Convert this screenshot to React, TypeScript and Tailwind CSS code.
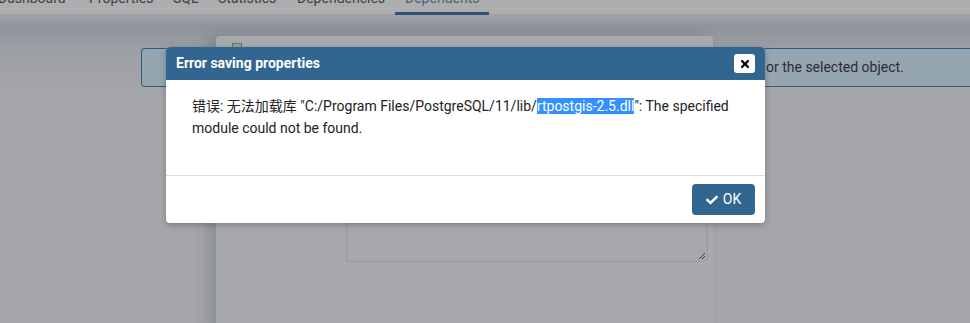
import { FaCheck, FaTimes } from "react-icons/fa";

const tabs = [
  { name: "Dashboard", left: -2 },
  { name: "Properties", left: 89 },
  { name: "SQL", left: 173 },
  { name: "Statistics", left: 218 },
  { name: "Dependencies", left: 297 },
  { name: "Dependents", left: 405 },
];

const App = () => {
  return (
    <div className="relative w-[970px] h-[323px] overflow-hidden bg-[#a5a6aa] font-['Roboto','Noto_Sans_CJK_SC',sans-serif]">
      {/* tab strip, scrolled so only the bottom shows */}
      <div className="relative h-[15px] bg-[#adaeb0] border-b border-[#9b9da1]">
        {tabs.map((t, i) => (
          <span
            key={i}
            style={{ left: t.left }}
            className={
              "absolute top-[-10px] text-[14px] leading-[17px] " +
              (i === 5 ? "text-[#4d6073]" : "text-[#4a3c3e]")
            }
          >
            {t.name}
          </span>
        ))}
        <div className="absolute left-[395px] top-[12px] w-[94px] h-[3px] bg-[#2f5275]" />
      </div>

      {/* page content under overlay */}
      <div className="h-[308px] bg-[linear-gradient(180deg,#a1a3a8_0px,#8f949c_12px,#9ea0a6_40px,#a5a6aa_80px)] pt-[33px] pl-[141px]">
        <div className="h-[39px] flex items-center pl-[624px] rounded-l-[4px] border border-r-0 border-[#2e5b82] bg-[#95a6b0] text-[14px] text-[#2b2c33]">
          or the selected object.
        </div>
      </div>

      {/* dialog behind */}
      <div className="absolute left-[216px] top-[36px] w-[497px] h-[300px] rounded-t-[4px] bg-[#a8a9ad] shadow-[-8px_0_14px_rgba(60,70,90,0.25)]">
        <div className="flex items-center gap-[20px] pl-[16px] pt-[7px]">
          <span className="w-[10px] h-[10px] border border-[#5f7a5c] bg-[#93a58f]" />
        </div>
        <div className="absolute left-[130px] top-[150px] w-[362px] h-[76px] rounded-[3px] border border-[#989aa0] bg-[#a7a8ac]">
          <svg className="absolute right-[1px] bottom-[1px]" width="9" height="9" viewBox="0 0 9 9">
            <path d="M8 2 L2 8 M8 5 L5 8" stroke="#3b3c40" strokeWidth="1" />
          </svg>
        </div>
      </div>

      {/* modal */}
      <div className="absolute left-[166px] top-[47px] w-[599px] h-[176px] rounded-[4px] bg-white shadow-[0_2px_6px_rgba(0,0,0,0.25)] overflow-hidden">
        <div className="h-[33px] bg-[#326590] flex items-center justify-between pl-[10px] pr-[10px]">
          <span className="text-white font-bold text-[14px]">Error saving properties</span>
          <button className="w-[21px] h-[19px] rounded-[3px] bg-white flex items-center justify-center">
            <FaTimes className="text-black" size={12} />
          </button>
        </div>
        <div className="h-[95px] pt-[15px] pl-[26px] pr-[26px]">
          <p className="text-[14px] leading-[22px] text-[#222]">
            错误: 无法加载库 "C:/Program Files/PostgreSQL/11/lib/
            <span className="bg-[#3390ff] text-white">rtpostgis-2.5.dll</span>
            ": The specified module could not be found.
          </p>
        </div>
        <div className="border-t border-[#dcdde2] h-[48px] flex items-center justify-end pr-[10px]">
          <button className="h-[31px] w-[63px] rounded-[4px] bg-[#326590] text-white text-[14px] flex items-center justify-center gap-[5px]">
            <FaCheck size={12} />
            OK
          </button>
        </div>
      </div>
    </div>
  );
};

export default App;
